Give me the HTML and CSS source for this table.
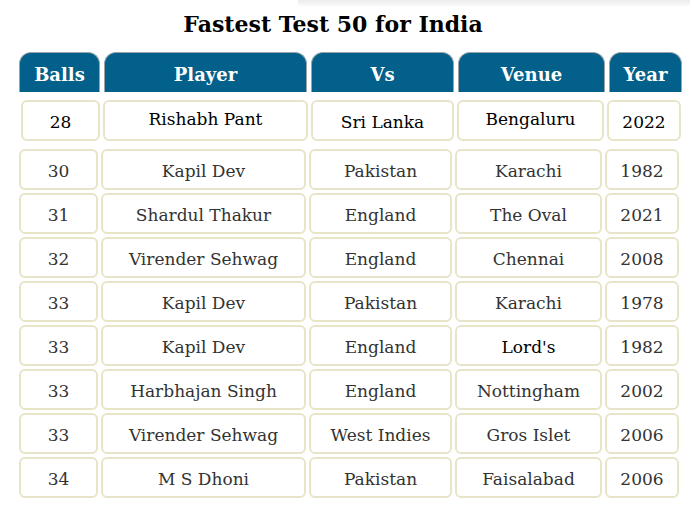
FILE: index.html
```html
<!DOCTYPE html>
<html>
<head>
<meta charset="utf-8">
<link rel="stylesheet" href="styles.css">
</head>
<body>
<div class="topshade"></div>
<h1 class="title">Fastest Test 50 for India</h1>
<div class="table">
  <div class="row head">
    <div class="cell">Balls</div>
    <div class="cell">Player</div>
    <div class="cell">Vs</div>
    <div class="cell">Venue</div>
    <div class="cell">Year</div>
  </div>
  <div class="row first">
    <div class="cell">28</div>
    <div class="cell up">Rishabh Pant</div>
    <div class="cell">Sri Lanka</div>
    <div class="cell up">Bengaluru</div>
    <div class="cell">2022</div>
  </div>
  <div class="row"><div class="cell">30</div><div class="cell">Kapil Dev</div><div class="cell">Pakistan</div><div class="cell">Karachi</div><div class="cell">1982</div></div>
  <div class="row"><div class="cell">31</div><div class="cell">Shardul Thakur</div><div class="cell">England</div><div class="cell">The Oval</div><div class="cell">2021</div></div>
  <div class="row"><div class="cell">32</div><div class="cell">Virender Sehwag</div><div class="cell">England</div><div class="cell">Chennai</div><div class="cell">2008</div></div>
  <div class="row"><div class="cell">33</div><div class="cell">Kapil Dev</div><div class="cell">Pakistan</div><div class="cell">Karachi</div><div class="cell">1978</div></div>
  <div class="row"><div class="cell">33</div><div class="cell">Kapil Dev</div><div class="cell">England</div><div class="cell dark">Lord's</div><div class="cell">1982</div></div>
  <div class="row"><div class="cell">33</div><div class="cell">Harbhajan Singh</div><div class="cell">England</div><div class="cell">Nottingham</div><div class="cell">2002</div></div>
  <div class="row"><div class="cell">33</div><div class="cell">Virender Sehwag</div><div class="cell">West Indies</div><div class="cell">Gros Islet</div><div class="cell">2006</div></div>
  <div class="row"><div class="cell">34</div><div class="cell">M S Dhoni</div><div class="cell">Pakistan</div><div class="cell">Faisalabad</div><div class="cell">2006</div></div>
</div>
</body>
</html>
```
FILE: styles.css
```css
html, body {
  margin: 0;
  padding: 0;
  background: #fff;
}
body {
  font-family: "DejaVu Serif", Georgia, serif;
  width: 694px;
}
.topshade {
  margin-left: 298px;
  width: 392px;
  height: 6px;
  background: linear-gradient(#ececec, #fafafa);
}
.title {
  margin: 4px 0 0 0;
  padding-right: 28px;
  text-align: center;
  font-size: 22px;
  line-height: 28px;
  font-weight: bold;
  color: #000;
}
.table {
  margin: 14px 0 0 19px;
  display: flex;
  flex-direction: column;
  gap: 3px;
}
.row {
  display: grid;
  grid-template-columns: 79px 205px 143px 147px 74px;
  column-gap: 3px;
  height: 41px;
}
.cell {
  box-sizing: border-box;
  border: 2px solid #e8e4c8;
  border-radius: 6px;
  display: flex;
  align-items: center;
  justify-content: center;
  font-size: 17px;
  color: #333;
  padding-top: 2px;
}
.head {
  height: 40px;
  grid-template-columns: 81px 203px 143px 147px 73px;
  column-gap: 4px;
}
.head .cell {
  background: #02608a;
  border: 1px solid #9aa4aa;
  border-bottom: none;
  border-radius: 12px 12px 0 0;
  color: #fff;
  font-weight: bold;
  font-size: 18px;
  padding-top: 4px;
}
.first {
  margin: 5px 0 5px 2px;
}
.first .cell {
  color: #000;
}
.first .cell.up {
  padding-top: 0;
  padding-bottom: 4px;
}
.dark {
  color: #000 !important;
}
```
